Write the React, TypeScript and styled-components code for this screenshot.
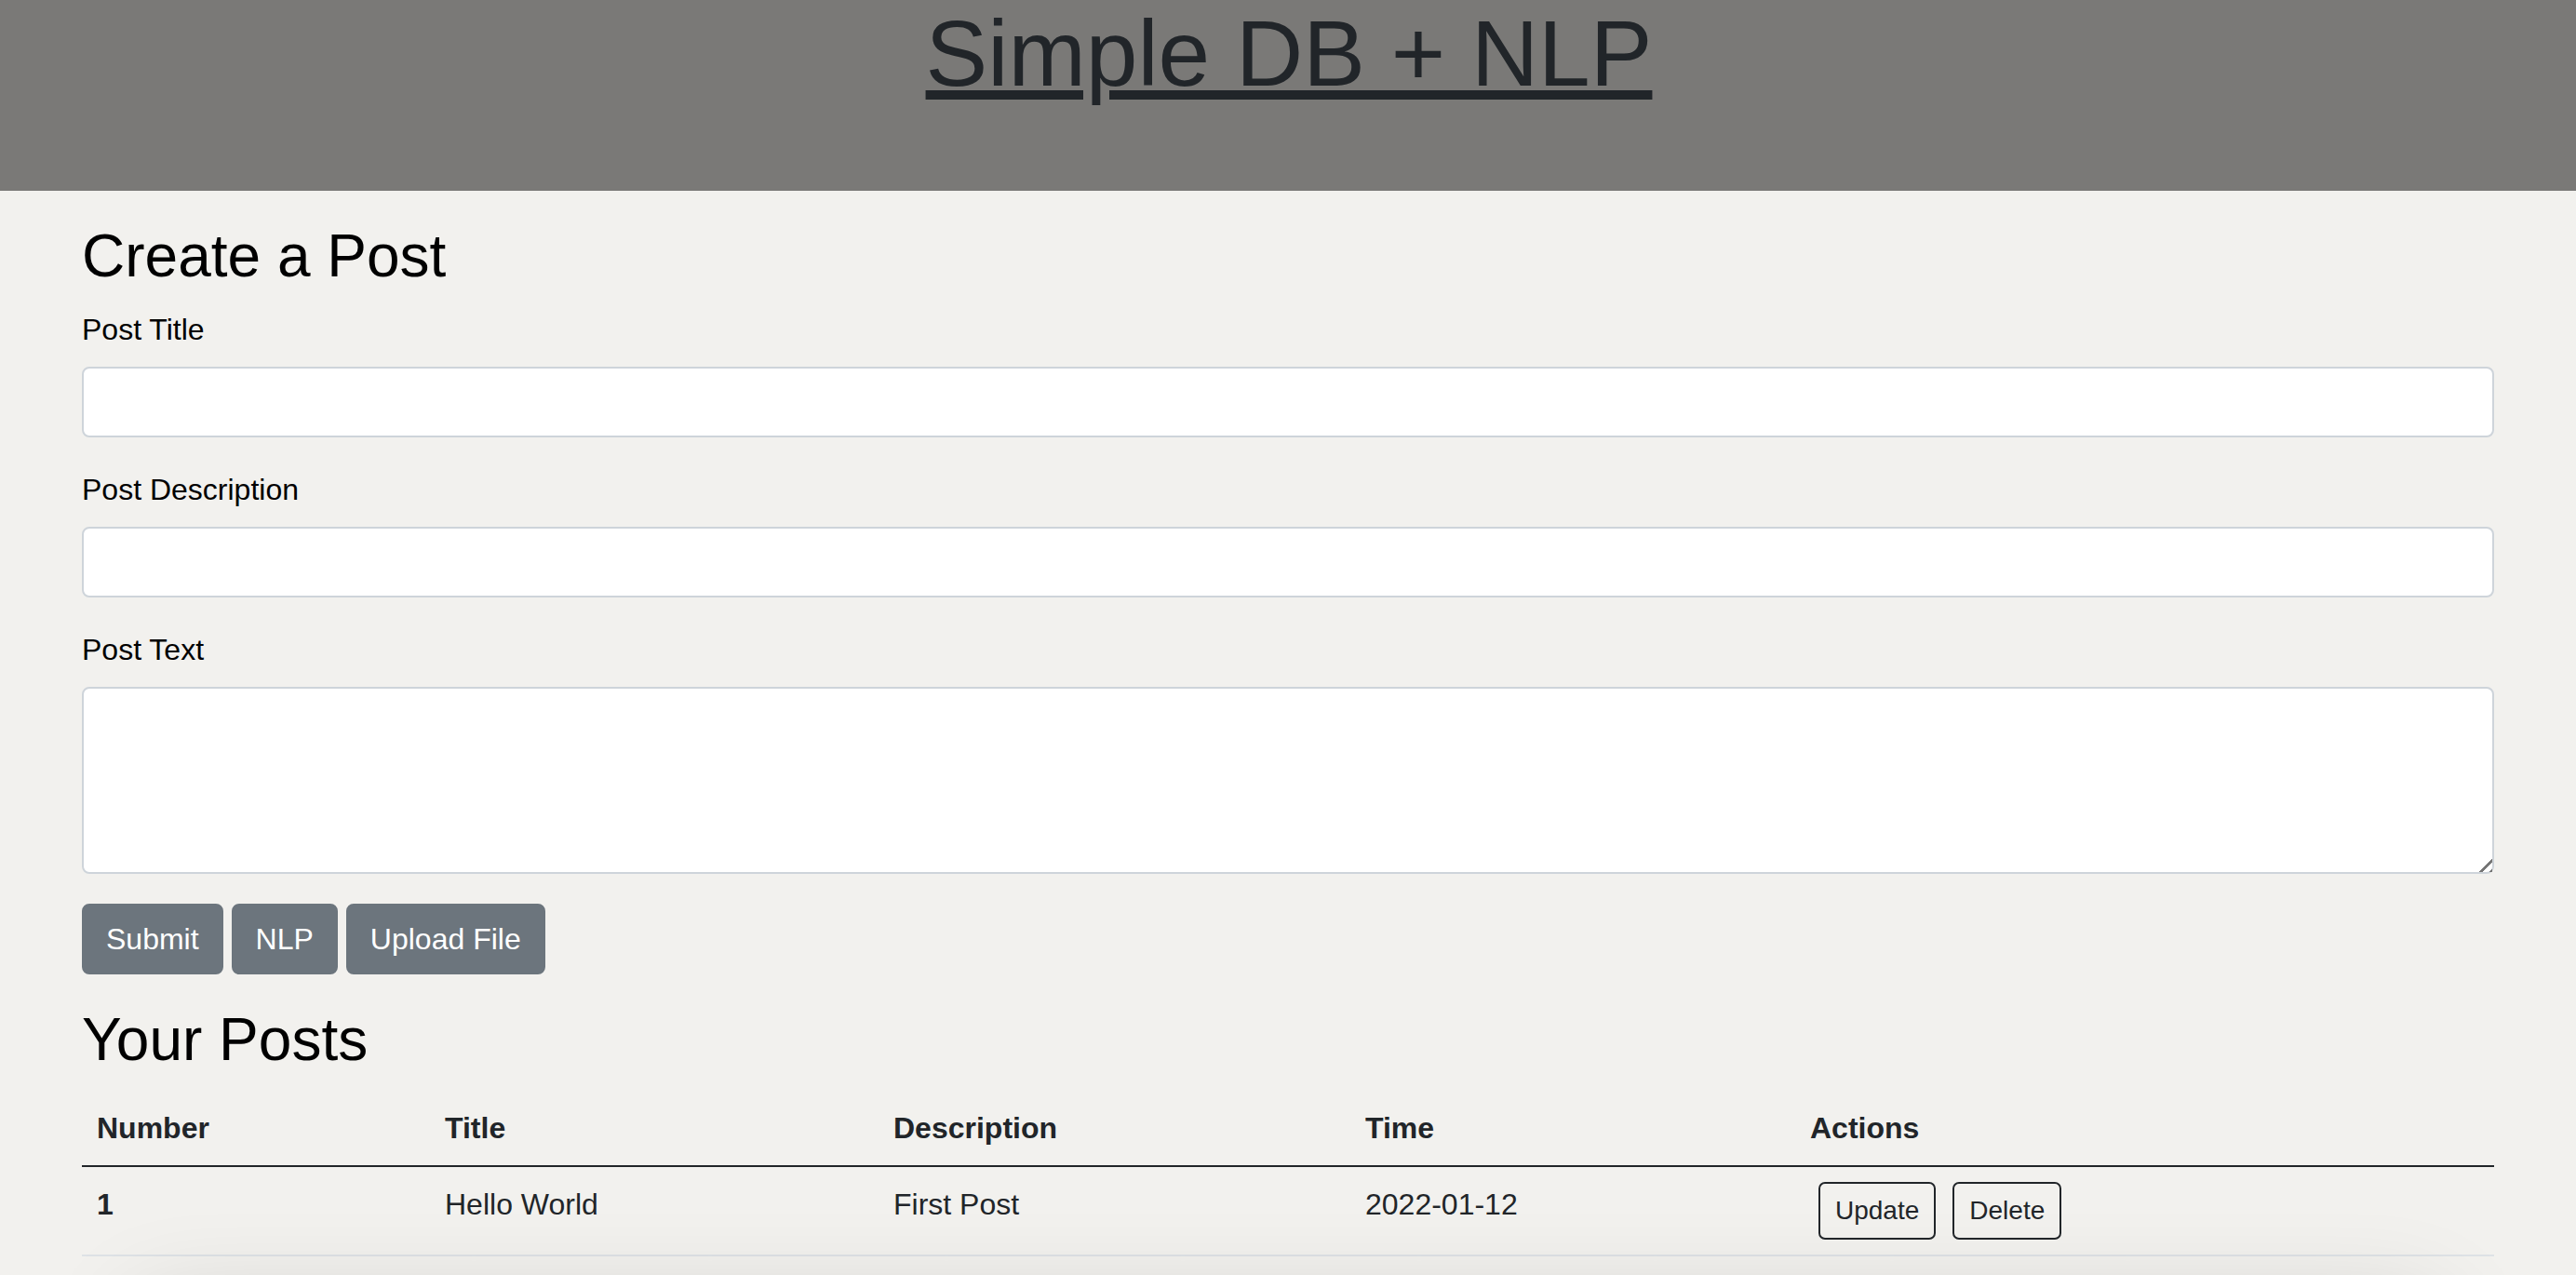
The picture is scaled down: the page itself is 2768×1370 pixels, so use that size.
import { useState } from 'react';
import styled, { createGlobalStyle } from 'styled-components';

type Post = {
  id: number;
  title: string;
  description: string;
  time: string;
};

const posts: Post[] = [{ id: 1, title: 'Hello World', description: 'First Post', time: '2022-01-12' }];

const columns = [
  { label: 'Number', width: 374 },
  { label: 'Title', width: 482 },
  { label: 'Description', width: 507 },
  { label: 'Time', width: 478 },
  { label: 'Actions', width: 751 },
];

function App() {
  const [title, setTitle] = useState('');
  const [description, setDescription] = useState('');
  const [text, setText] = useState('');

  return (
    <>
      <GlobalStyle />
      <Header>
        <Title href="#">Simple DB + NLP</Title>
      </Header>
      <Container>
        <SectionTitle>Create a Post</SectionTitle>
        <Field>
          <Label htmlFor="post-title">Post Title</Label>
          <Input id="post-title" value={title} onChange={(e) => setTitle(e.target.value)} />
        </Field>
        <Field>
          <Label htmlFor="post-description">Post Description</Label>
          <Input id="post-description" value={description} onChange={(e) => setDescription(e.target.value)} />
        </Field>
        <Field>
          <Label htmlFor="post-text">Post Text</Label>
          <TextArea id="post-text" value={text} onChange={(e) => setText(e.target.value)} />
        </Field>
        <ButtonRow>
          <Button>Submit</Button>
          <Button>NLP</Button>
          <Button>Upload File</Button>
        </ButtonRow>

        <SectionTitle>Your Posts</SectionTitle>
        <Table>
          <colgroup>
            {columns.map((col) => (
              <col key={col.label} style={{ width: col.width }} />
            ))}
          </colgroup>
          <thead>
            <tr>
              {columns.map((col) => (
                <HeadCell key={col.label}>{col.label}</HeadCell>
              ))}
            </tr>
          </thead>
          <tbody>
            {posts.map((post) => (
              <tr key={post.id}>
                <Cell as="th" scope="row" $bold>
                  {post.id}
                </Cell>
                <Cell>{post.title}</Cell>
                <Cell>{post.description}</Cell>
                <Cell>{post.time}</Cell>
                <Cell>
                  <Actions>
                    <SmallButton>Update</SmallButton>
                    <SmallButton>Delete</SmallButton>
                  </Actions>
                </Cell>
              </tr>
            ))}
          </tbody>
        </Table>
        <Below />
      </Container>
    </>
  );
}

export default App;

const GlobalStyle = createGlobalStyle`
  html, body {
    margin: 0;
    background: #f2f1ee;
    font-family: "Liberation Sans", Arial, sans-serif;
    color: #000;
  }
  * {
    box-sizing: border-box;
  }
`;

const Header = styled.header`
  height: 205px;
  background: #7a7977;
  display: flex;
  justify-content: center;
  align-items: flex-start;
`;

const Title = styled.a`
  margin-left: 2px;
  font-size: 100px;
  line-height: normal;
  color: #212529;
  text-decoration: underline;
`;

const Container = styled.main`
  padding: 32px 88px 0;
  overflow: hidden;
`;

const SectionTitle = styled.h2`
  margin: 0 0 16px;
  font-size: 64px;
  font-weight: 500;
  line-height: 1.2;
  color: #000;
`;

const Field = styled.div`
  margin-bottom: 32px;
`;

const Label = styled.label`
  display: block;
  margin-bottom: 16px;
  font-size: 32px;
  line-height: 48px;
`;

const Input = styled.input`
  display: block;
  width: 100%;
  height: 76px;
  padding: 12px 24px;
  font: inherit;
  font-size: 32px;
  background: #fff;
  border: 2px solid #ced4da;
  border-radius: 8px;
  outline: none;
`;

const TextArea = styled.textarea`
  display: block;
  width: 100%;
  height: 201px;
  padding: 12px 24px;
  font: inherit;
  font-size: 32px;
  background: #fff;
  border: 2px solid #ced4da;
  border-radius: 8px;
  resize: vertical;
  outline: none;

  &::-webkit-scrollbar {
    width: 26px;
    height: 26px;
  }

  &::-webkit-resizer {
    background:
      linear-gradient(135deg, #fff 0 52%, transparent 52%),
      repeating-linear-gradient(135deg, transparent 0 3px, #767676 3px 5.5px, transparent 5.5px 8px);
  }
`;

const ButtonRow = styled.div`
  display: flex;
  gap: 9px;
  margin-bottom: 32px;
`;

const Button = styled.button`
  padding: 12px 24px;
  font-family: inherit;
  font-size: 32px;
  line-height: 48px;
  color: #fff;
  background: #6c757d;
  border: 2px solid #6c757d;
  border-radius: 8px;
  cursor: pointer;
`;

const Table = styled.table`
  width: 100%;
  table-layout: fixed;
  border-collapse: collapse;
  color: #212529;
  font-size: 32px;
  line-height: 48px;
`;

const HeadCell = styled.th`
  padding: 16px;
  text-align: left;
  vertical-align: bottom;
  font-weight: 700;
  border-bottom: 2px solid #212529;
`;

const Cell = styled.td<{ $bold?: boolean }>`
  padding: 16px;
  text-align: left;
  vertical-align: top;
  font-weight: ${(props) => (props.$bold ? 700 : 400)};
  border-bottom: 2px solid #dee2e6;
`;

const Actions = styled.div`
  display: flex;
  gap: 18px;
  margin-left: 9px;
`;

const SmallButton = styled.button`
  padding: 8px 16px;
  font-family: inherit;
  font-size: 28px;
  line-height: 42px;
  color: #212529;
  background: transparent;
  border: 2px solid #212529;
  border-radius: 7px;
  cursor: pointer;
`;

const Below = styled.div`
  height: 240px;
  margin: 56px 60px 0;
  background: #f2f1ee;
  box-shadow: 0 0 110px rgba(0, 0, 0, 0.16);
`;
